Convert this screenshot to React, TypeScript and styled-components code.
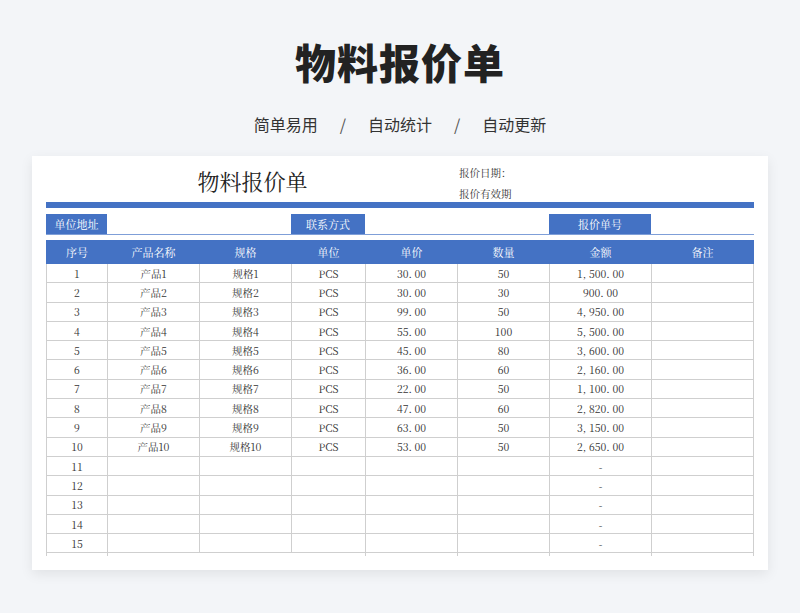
import styled, { createGlobalStyle } from 'styled-components';

const Global = createGlobalStyle`
  body { margin: 0; background: #f3f5f8; font-family: "Noto Sans CJK SC", "Noto Sans", sans-serif; }
`;

const Page = styled.div`
  width: 800px;
  height: 613px;
  overflow: hidden;
  display: flex;
  flex-direction: column;
  align-items: center;
`;

const Heading = styled.h1`
  margin: 33px 0 0;
  height: 56px;
  font-size: 41px;
  line-height: 56px;
  font-weight: 900;
  color: #222;
  letter-spacing: 1px;
`;

const Sub = styled.div`
  margin-top: 24px;
  font-size: 16px;
  line-height: 22px;
  color: #333;
  display: flex;
  gap: 18px;
  span.sep { color: #555; margin: 0 4px; }
`;

const Card = styled.div`
  margin-top: 21px;
  width: 736px;
  height: 414px;
  background: #fff;
  box-shadow: 0 4px 12px rgba(0, 0, 0, 0.08);
  padding: 0 14px;
  box-sizing: border-box;
  font-family: "Noto Serif CJK SC", "Liberation Serif", "Noto Sans CJK SC", serif;
`;

const Clip = styled.div`
  height: 400px;
  overflow: hidden;
`;

const Top = styled.div`
  display: grid;
  grid-template-columns: 413px 1fr;
  height: 46px;
`;

const DocTitle = styled.div`
  text-align: center;
  font-size: 22px;
  padding-top: 9px;
  padding-left: 0;
  color: #222;
`;

const Meta = styled.div`
  font-size: 10.5px;
  line-height: 14px;
  color: #333;
  display: flex;
  flex-direction: column;
  gap: 7px;
  padding-top: 10px;
`;

const Bar = styled.div`
  height: 6px;
  background: #4472c4;
`;

const Info = styled.div`
  display: grid;
  grid-template-columns: 61px 184px 74px 184px 102px 102px;
  margin-top: 6px;
  height: 20px;
  border-bottom: 1px solid #7f9fd8;
`;

const InfoCell = styled.div<{ $label?: boolean }>`
  background: ${({ $label }) => ($label ? '#4472c4' : '#fff')};
  color: #fff;
  font-size: 11px;
  display: flex;
  align-items: center;
  justify-content: center;
`;

const Table = styled.table`
  margin-top: 5px;
  width: 707px;
  border-collapse: collapse;
  table-layout: fixed;
  font-size: 10.5px;
  color: #333;
  th {
    background: #4472c4;
    color: #fff;
    font-weight: normal;
    height: 20px;
    font-size: 11px;
    border: 1px solid #4472c4;
  }
  td {
    border: 1px solid #cfcfcf;
    height: 18.3px;
    padding: 0;
    text-align: center;
    white-space: nowrap;
  }
`;

const widths = [61, 92, 92, 74, 92, 92, 102, 102];
const heads = ['序号', '产品名称', '规格', '单位', '单价', '数量', '金额', '备注'];
const data = [
  ['30.00', 50, '1,500.00'],
  ['30.00', 30, '900.00'],
  ['99.00', 50, '4,950.00'],
  ['55.00', 100, '5,500.00'],
  ['45.00', 80, '3,600.00'],
  ['36.00', 60, '2,160.00'],
  ['22.00', 50, '1,100.00'],
  ['47.00', 60, '2,820.00'],
  ['63.00', 50, '3,150.00'],
  ['53.00', 50, '2,650.00'],
];

export default function App() {
  const rows = Array.from({ length: 15 }, (_, i) => {
    const d = data[i];
    return d
      ? [String(i + 1), `产品${i + 1}`, `规格${i + 1}`, 'PCS', d[0].replace('.', '. '), String(d[1]), String(d[2]).replace(',', ', ').replace('.', '. '), '']
      : [String(i + 1), '', '', '', '', '', '-', ''];
  });
  return (
    <Page>
      <Global />
      <Heading>物料报价单</Heading>
      <Sub>
        <span>简单易用</span><span className="sep">/</span>
        <span>自动统计</span><span className="sep">/</span>
        <span>自动更新</span>
      </Sub>
      <Card>
        <Clip>
          <Top>
            <DocTitle>物料报价单</DocTitle>
            <Meta>
              <span>报价日期：</span>
              <span>报价有效期</span>
            </Meta>
          </Top>
          <Bar />
          <Info>
            <InfoCell $label>单位地址</InfoCell>
            <InfoCell />
            <InfoCell $label>联系方式</InfoCell>
            <InfoCell />
            <InfoCell $label>报价单号</InfoCell>
            <InfoCell />
          </Info>
          <Table>
            <colgroup>
              {widths.map((w, i) => <col key={i} style={{ width: w }} />)}
            </colgroup>
            <thead>
              <tr>{heads.map((h) => <th key={h}>{h}</th>)}</tr>
            </thead>
            <tbody>
              {rows.map((r, i) => (
                <tr key={i}>{r.map((c, j) => <td key={j}>{c}</td>)}</tr>
              ))}
              <tr>
                <td>合计（大写）</td>
                <td colSpan={3}>肆万叁仟叁佰叁拾元整</td>
                <td></td>
                <td>合计（小写）</td>
                <td>27, 330. 00</td>
                <td></td>
              </tr>
            </tbody>
          </Table>
        </Clip>
      </Card>
    </Page>
  );
}
